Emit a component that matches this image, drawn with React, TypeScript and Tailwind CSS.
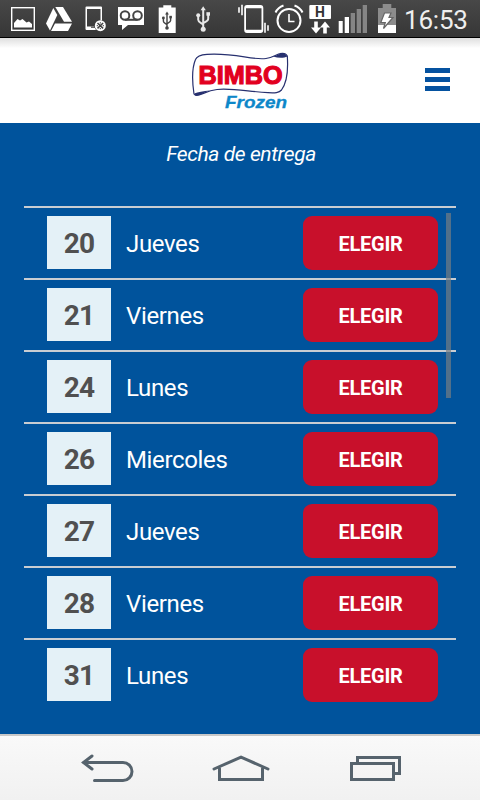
import React, { useState } from 'react';

interface Delivery {
  date: number;
  weekday: string;
}

const deliveries: Delivery[] = [
  { date: 20, weekday: 'Jueves' },
  { date: 21, weekday: 'Viernes' },
  { date: 24, weekday: 'Lunes' },
  { date: 26, weekday: 'Miercoles' },
  { date: 27, weekday: 'Jueves' },
  { date: 28, weekday: 'Viernes' },
  { date: 31, weekday: 'Lunes' },
];

interface GlyphProps {
  x: number;
  width: number;
  children: React.ReactNode;
}

// All status icons share one coordinate system, each glyph shows its own slice
const Glyph: React.FC<GlyphProps> = ({ x, width, children }) => (
  <svg width={width} height={37} viewBox={`${x} 0 ${width} 37`} fill="none" className="shrink-0">
    {children}
  </svg>
);

const UsbMark: React.FC<{ color: string }> = ({ color }) => (
  <g stroke={color} fill={color}>
    <path d="M0 -9V10M-5 -3V1C-5 4 0 4.500 0 6.500M5 -4V0C5 3 0 3.500 0 5" fill="none" strokeWidth="2" />
    <path d="M-2.600 -8.500L0 -12.500L2.600 -8.500Z" stroke="none" />
    <circle cx="0" cy="10.500" r="2.500" stroke="none" />
    <circle cx="-5" cy="-3.500" r="2" stroke="none" />
    <rect x="3.200" y="-6.500" width="3.600" height="3.500" stroke="none" />
  </g>
);

const StatusBar = () => (
  <div className="flex h-[38px] border-b border-black bg-gradient-to-b from-[#484848] to-[#363636]">
    <Glyph x={0} width={40}>
      <rect x="11.700" y="7.700" width="22.600" height="22.600" stroke="#fff" strokeWidth="1.400" />
      <path d="M14 27.500V23L17.500 19L20 20.500L22.500 19L26.500 22.500L29 21.500L32 24V27.500Z" fill="#fff" />
    </Glyph>
    <Glyph x={40} width={40}>
      <path d="M53.300 8L57.300 15L50 30.500L46 23.500Z" fill="#fff" />
      <path d="M55.300 7H63L72 21.800H64Z" fill="#fff" />
      <path d="M55 23.500H72L68 31H51Z" fill="#fff" />
    </Glyph>
    <Glyph x={80} width={32}>
      <path d="M85.500 7.500Q85.500 6.500 86.500 6.500H101Q102 6.500 102 7.500V20.500H100.500V9H87V26.500H94L96 30H86.500Q85.500 30 85.500 29Z" fill="#fff" />
      <path d="M91 27.200H95" stroke="#444" strokeWidth="1.200" />
      <circle cx="100.300" cy="25.700" r="5.500" fill="#fff" />
      <path d="M97.500 23L103.100 28.400M103.100 23L97.500 28.400" stroke="#444" strokeWidth="1.500" />
      <path d="M100.300 22.200V23.500M100.300 28V29.200M96.700 25.700H98M102.700 25.700H104" stroke="#444" />
    </Glyph>
    <Glyph x={112} width={38}>
      <path d="M118 7H144V25H128L122 30V25H118Z" fill="#fff" />
      <g stroke="#444" strokeWidth="2">
        <circle cx="125" cy="15.500" r="4.300" />
        <circle cx="137.500" cy="15.500" r="4.300" />
        <path d="M125 19.800H137.500" />
      </g>
    </Glyph>
    <Glyph x={150} width={35}>
      <path d="M158.700 7.500H163.300V5.300H171.300V7.500H175.700V33H158.700Z" fill="#fff" />
      <g transform="translate(167 20.500) scale(.72)">
        <UsbMark color="#444" />
      </g>
    </Glyph>
    <Glyph x={185} width={40}>
      <g transform="translate(203.200 18.700)">
        <UsbMark color="#e8e8e8" />
      </g>
    </Glyph>
    <Glyph x={225} width={47}>
      <path d="M247 5H260.500Q263.300 5 263.300 8V30Q263.300 33 260.500 33H247Q244.200 33 244.200 30V8Q244.200 5 247 5ZM246 8.200V29.800H261.500V8.200Z" fill="#fff" fillRule="evenodd" />
      <path d="M239 7.300V12.700M242 4.700V15.300M265 22.700V32.700M268 25.300V30.700" stroke="#fff" strokeWidth="1.600" />
    </Glyph>
    <Glyph x={272} width={34}>
      <circle cx="289" cy="20.500" r="11.500" stroke="#fff" strokeWidth="2" />
      <path d="M289 14V21.500H294.500" stroke="#fff" strokeWidth="1.600" />
      <path d="M275.500 12.500Q278 7.500 283.500 5.500M294.500 5.500Q300 7.500 302.500 12.500" stroke="#fff" strokeWidth="2" />
    </Glyph>
    <Glyph x={306} width={30}>
      <rect x="309.300" y="5" width="21.700" height="14" rx="1" fill="#fff" />
      <text x="320" y="17" textAnchor="middle" fontSize="14" fontWeight="700" fill="#333" fontFamily="Roboto, sans-serif">H</text>
      <path d="M314.200 21.500H317.800V27.500H321L316 33.500L311 27.500H314.200Z" fill="#fff" />
      <path d="M323.200 33.500H326.800V27.500H330L325 21.500L320 27.500H323.200Z" fill="#fff" />
    </Glyph>
    <Glyph x={336} width={36}>
      <path d="M338.700 21H342.700V33H338.700ZM344.700 17H349V33H344.700Z" fill="#fff" />
      <path d="M350.700 13H355V33H350.700ZM356.700 9H361V33H356.700ZM362.700 5H367V33H362.700Z" fill="#858585" />
    </Glyph>
    <Glyph x={372} width={32}>
      <path d="M378 8H382.700V4H391.300V8H396V25H378Z" fill="#8c8c8c" />
      <rect x="378" y="25" width="18" height="8" fill="#fff" />
      <path d="M384.500 13H391L389 17.500H393L383.500 28.500L385.300 22.500H380.800Z" fill="#fff" stroke="#666" strokeWidth="1.200" />
    </Glyph>
    <span className="pt-[5px] text-[26px] leading-[30px] tracking-[-0.2px] text-[#eeeeee]">16:53</span>
  </div>
);

const Logo = () => (
  <svg width="104" height="64" viewBox="188 48 104 64" fill="none">
    <path
      d="M194 94C192.500 84 191.500 69 195.500 59.500C197 55.500 201 54.700 207 54.300C236 52.500 251 60.500 266 58.500C273 57.500 276 54.500 280 53.700C283 53 286 53.500 287.300 56C288 66 287.500 82 281.500 90C279 93 275 93 268 92.700C248 91.500 232 88 217 89.500C208 90.500 203 94 199 95C197 95.500 195 95.500 194 94Z"
      fill="#fff"
      stroke="#27306f"
      strokeWidth="1.200"
    />
    <path d="M273 56.500C278 55 280 53 284 53.200L287.600 56.500C283 58.500 278 58 273 56.500ZM210 90.500C203 91 198 92 194.300 93.500L195.500 95.800C201 95.500 203 92.500 210 90.500Z" fill="#27306f" />
    <text x="198.500" y="83.500" textLength="84" lengthAdjust="spacingAndGlyphs" fontSize="26.500" fontWeight="700" fill="#e2001f" stroke="#e2001f" strokeWidth="1.200" fontFamily="'Liberation Sans', sans-serif">BIMBO</text>
    <text x="225" y="108" textLength="62" lengthAdjust="spacingAndGlyphs" fontSize="16.500" fontWeight="700" fontStyle="italic" fill="#0d87c9" stroke="#0d87c9" strokeWidth=".3" fontFamily="'Liberation Sans', sans-serif">Frozen</text>
  </svg>
);

const Header = () => (
  <header className="flex h-[85px] justify-end bg-white bg-gradient-to-b from-[#dfdfdf] via-white via-[12%] to-white pt-2.5 pr-[30px]">
    <div className="mr-[133px]">
      <Logo />
    </div>
    <button className="mt-5 flex h-[23px] w-[25px] flex-col justify-between" aria-label="Menu">
      <span className="h-[5px] w-full bg-[#0552a0]" />
      <span className="h-[5px] w-full bg-[#0552a0]" />
      <span className="h-[5px] w-full bg-[#0552a0]" />
    </button>
  </header>
);

const DeliveryRow: React.FC<{ item: Delivery; onSelect: () => void }> = ({ item, onSelect }) => (
  <li className="flex h-[72px] items-start border-t-2 border-[#c9cdd2] pt-2 pr-[18px] pl-[23px]">
    <span className="flex h-[53px] w-16 items-center justify-center bg-[#e4f1f7] pt-0.5 text-[28px] font-bold tracking-[-0.8px] text-[#505050]">
      {item.date}
    </span>
    <span className="ml-[15px] flex-1 text-2xl leading-[56px] tracking-[-0.35px] text-white">{item.weekday}</span>
    <button onClick={onSelect} className="h-[54px] w-[135px] rounded-[9px] bg-[#c8102b] pt-0.5 text-xl font-bold tracking-[-0.25px] text-white">
      ELEGIR
    </button>
  </li>
);

const NavBar = () => (
  <nav className="flex h-[66px] border-t-2 border-[#c8c8c8] bg-gradient-to-b from-[#f9f9f9] to-[#f1f1f1] pl-[78px] text-[#56636d]">
    <button aria-label="Back">
      <svg width="60" height="64" viewBox="78 736 60 64" fill="none" stroke="currentColor" strokeWidth="3" strokeLinecap="round">
        <path d="M84 762.500H123A9 9 0 0 1 123 780.500H94.500" />
        <path d="M92 756L83.500 762.500L92 769" />
      </svg>
    </button>
    <button className="ml-[70px]" aria-label="Home">
      <svg width="66" height="64" viewBox="208 736 66 64" fill="none" stroke="currentColor" strokeWidth="3" strokeLinecap="round">
        <path d="M214 769L241 757.200L268 769" />
        <path d="M219.500 768.500V779.500H262.500V768.500" />
      </svg>
    </button>
    <button className="ml-[72px]" aria-label="Recent">
      <svg width="60" height="64" viewBox="346 736 60 64" fill="none" stroke="currentColor" strokeWidth="3">
        <path d="M357.500 762V757.500H399.500V773.500H394" />
        <rect x="351.500" y="763.500" width="42" height="16" />
      </svg>
    </button>
  </nav>
);

const App = () => {
  const [, setSelected] = useState<number | null>(null);

  return (
    <div className="flex h-[800px] w-[480px] flex-col overflow-hidden bg-[#00539c] font-[Roboto,sans-serif]">
      <StatusBar />
      <Header />
      <main className="flex-1 bg-[#00539c] px-6">
        <h1 className="h-[83px] pt-4 pl-0.5 text-center text-[21px] leading-[30px] tracking-[-0.4px] text-white italic">Fecha de entrega</h1>
        <div className="relative">
          <ul>
            {deliveries.map((item) => (
              <DeliveryRow key={item.date} item={item} onSelect={() => setSelected(item.date)} />
            ))}
          </ul>
          {/* Scroll thumb */}
          <div className="absolute top-[7px] right-[5px] h-[185px] w-[5px] bg-[#757d83]/70" />
        </div>
      </main>
      <NavBar />
    </div>
  );
};

export default App;
